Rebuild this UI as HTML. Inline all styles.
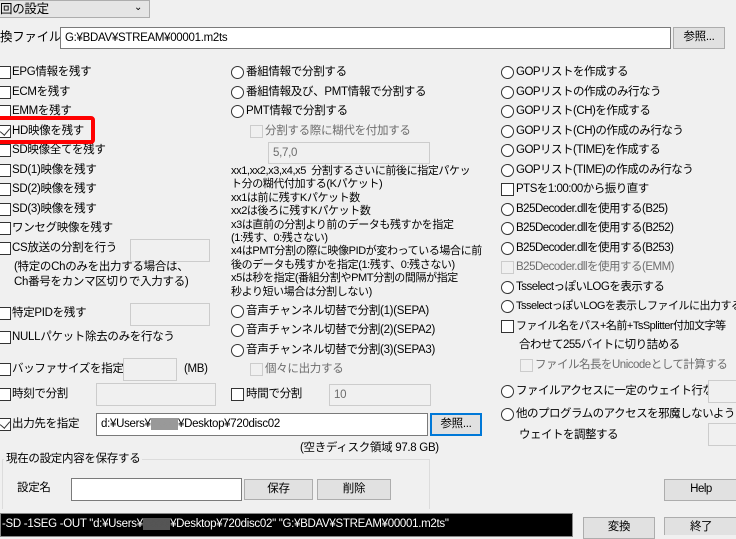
<!DOCTYPE html>
<html><head><meta charset="utf-8"><style>
*{box-sizing:border-box;margin:0;padding:0}
body{width:736px;height:535px;overflow:hidden;background:#f0f0f0;position:relative;font-family:"Liberation Sans","Noto Sans CJK JP",sans-serif;font-size:11.5px;letter-spacing:-0.3px;color:#000}
.a{position:absolute;white-space:nowrap;line-height:16px}
.cb{position:absolute;width:13px;height:13px;border:1px solid #333;background:#fff}
.cb.d{border-color:#ccc;background:#f0f0f0}
.rb{position:absolute;width:13px;height:13px;border:1px solid #333;border-radius:50%;background:#fff}
.in{position:absolute;background:#fff;border:1px solid #7a7a7a;line-height:20px;padding-left:4px}
.in.d{background:#f0f0f0;border-color:#ccc;color:#6d6d6d}
.bt{position:absolute;background:#e1e1e1;border:1px solid #adadad;text-align:center;line-height:19px}
.g{color:#6d6d6d}
.ck::after{content:"";position:absolute;left:3px;top:0px;width:5px;height:8px;border:solid #333;border-width:0 1.5px 1.5px 0;transform:rotate(40deg)}
</style></head><body>
<!-- combo -->
<div class="a" style="left:-2px;top:0;width:152px;height:18px;background:#e5e5e5;border:1px solid #adadad"></div>
<div class="a" style="left:0;top:1px;font-size:12.5px">回の設定</div>
<div class="a" style="left:134px;top:0px;font-size:10px">&#8964;</div>
<div class="a" style="left:0;top:29px;font-size:12.5px">換ファイル</div>
<div class="in" style="left:60px;top:27px;width:611px;height:22px">G:¥BDAV¥STREAM¥00001.m2ts</div>
<div class="bt" style="left:673px;top:27px;width:52px;height:22px">参照...</div>

<!-- left column -->
<div class="cb" style="left:-2px;top:66px"></div><div class="a" style="left:12px;top:64px">EPG情報を残す</div>
<div class="cb" style="left:-2px;top:86px"></div><div class="a" style="left:12px;top:84px">ECMを残す</div>
<div class="cb" style="left:-2px;top:105px"></div><div class="a" style="left:12px;top:103px">EMMを残す</div>
<div class="cb ck" style="left:-2px;top:125px"></div><div class="a" style="left:12px;top:123px">HD映像を残す</div>
<div class="cb" style="left:-2px;top:144px"></div><div class="a" style="left:12px;top:142px">SD映像全てを残す</div>
<div class="cb" style="left:-2px;top:164px"></div><div class="a" style="left:12px;top:162px">SD(1)映像を残す</div>
<div class="cb" style="left:-2px;top:183px"></div><div class="a" style="left:12px;top:181px">SD(2)映像を残す</div>
<div class="cb" style="left:-2px;top:203px"></div><div class="a" style="left:12px;top:201px">SD(3)映像を残す</div>
<div class="cb" style="left:-2px;top:222px"></div><div class="a" style="left:12px;top:220px">ワンセグ映像を残す</div>
<div class="cb" style="left:-2px;top:242px"></div><div class="a" style="left:12px;top:240px">CS放送の分割を行う</div>
<div class="in d" style="left:130px;top:239px;width:80px;height:23px"></div>
<div class="a" style="left:14px;top:260px;line-height:15px">(特定のChのみを出力する場合は、<br>Ch番号をカンマ区切りで入力する)</div>
<div class="cb" style="left:-2px;top:307px"></div><div class="a" style="left:12px;top:305px">特定PIDを残す</div>
<div class="in d" style="left:130px;top:303px;width:80px;height:23px"></div>
<div class="cb" style="left:-2px;top:331px"></div><div class="a" style="left:12px;top:329px">NULLパケット除去のみを行なう</div>
<div class="cb" style="left:-2px;top:363px"></div><div class="a" style="left:12px;top:361px">バッファサイズを指定</div>
<div class="in d" style="left:123px;top:358px;width:54px;height:23px"></div>
<div class="a" style="left:184px;top:361px">(MB)</div>
<div class="cb" style="left:-2px;top:388px"></div><div class="a" style="left:12px;top:386px">時刻で分割</div>
<div class="in d" style="left:96px;top:383px;width:120px;height:23px"></div>
<div class="cb ck" style="left:-2px;top:418px"></div><div class="a" style="left:12px;top:416px">出力先を指定</div>
<div class="in" style="left:96px;top:413px;width:332px;height:23px">d:¥Users¥<span style="background:#999;color:#999">xxxxx</span>¥Desktop¥720disc02</div>
<div class="bt" style="left:430px;top:413px;width:52px;height:23px;border:2px solid #0078d7;line-height:19px">参照...</div>
<div class="a" style="left:300px;top:440px">(空きディスク領域 97.8 GB)</div>

<!-- group box -->
<div class="a" style="left:2px;top:459px;width:428px;height:50px;border:1px solid #dcdcdc;border-bottom:none"></div>
<div class="a" style="left:4px;top:451px;background:#f0f0f0;padding:0 2px">現在の設定内容を保存する</div>
<div class="a" style="left:17px;top:480px">設定名</div>
<div class="in" style="left:71px;top:478px;width:171px;height:23px"></div>
<div class="bt" style="left:244px;top:479px;width:69px;height:21px">保存</div>
<div class="bt" style="left:317px;top:479px;width:74px;height:21px">削除</div>

<!-- middle column -->
<div class="rb" style="left:231px;top:66px"></div><div class="a" style="left:246px;top:64px">番組情報で分割する</div>
<div class="rb" style="left:231px;top:86px"></div><div class="a" style="left:246px;top:84px">番組情報及び、PMT情報で分割する</div>
<div class="rb" style="left:231px;top:105px"></div><div class="a" style="left:246px;top:103px">PMT情報で分割する</div>
<div class="cb d" style="left:250px;top:125px"></div><div class="a g" style="left:265px;top:123px">分割する際に糊代を付加する</div>
<div class="in d" style="left:268px;top:142px;width:162px;height:22px">5,7,0</div>
<div class="a" style="left:231px;top:165px;line-height:13.4px;font-size:11px;letter-spacing:-0.4px">xx1,xx2,x3,x4,x5&nbsp; 分割するさいに前後に指定パケッ<br>ト分の糊代付加する(Kパケット)<br>xx1は前に残すKパケット数<br>xx2は後ろに残すKパケット数<br>x3は直前の分割より前のデータも残すかを指定<br>(1:残す、0:残さない)<br>x4はPMT分割の際に映像PIDが変わっている場合に前<br>後のデータも残すかを指定(1:残す、0:残さない)<br>x5は秒を指定(番組分割やPMT分割の間隔が指定<br>秒より短い場合は分割しない)</div>
<div class="rb" style="left:231px;top:305px"></div><div class="a" style="left:246px;top:303px">音声チャンネル切替で分割(1)(SEPA)</div>
<div class="rb" style="left:231px;top:324px"></div><div class="a" style="left:246px;top:322px">音声チャンネル切替で分割(2)(SEPA2)</div>
<div class="rb" style="left:231px;top:344px"></div><div class="a" style="left:246px;top:342px">音声チャンネル切替で分割(3)(SEPA3)</div>
<div class="cb d" style="left:250px;top:363px"></div><div class="a g" style="left:265px;top:361px">個々に出力する</div>
<div class="cb" style="left:231px;top:388px"></div><div class="a" style="left:246px;top:386px">時間で分割</div>
<div class="in d" style="left:329px;top:384px;width:102px;height:22px">10</div>

<!-- right column -->
<div style="position:absolute;left:0;top:0;width:736px;height:535px;overflow:hidden;letter-spacing:-0.5px">
<div class="rb" style="left:501px;top:66px"></div><div class="a" style="left:516px;top:64px">GOPリストを作成する</div>
<div class="rb" style="left:501px;top:86px"></div><div class="a" style="left:516px;top:84px">GOPリストの作成のみ行なう</div>
<div class="rb" style="left:501px;top:105px"></div><div class="a" style="left:516px;top:103px">GOPリスト(CH)を作成する</div>
<div class="rb" style="left:501px;top:125px"></div><div class="a" style="left:516px;top:123px">GOPリスト(CH)の作成のみ行なう</div>
<div class="rb" style="left:501px;top:144px"></div><div class="a" style="left:516px;top:142px">GOPリスト(TIME)を作成する</div>
<div class="rb" style="left:501px;top:164px"></div><div class="a" style="left:516px;top:162px">GOPリスト(TIME)の作成のみ行なう</div>
<div class="cb" style="left:501px;top:183px"></div><div class="a" style="left:516px;top:181px">PTSを1:00:00から振り直す</div>
<div class="rb" style="left:501px;top:203px"></div><div class="a" style="left:516px;top:201px">B25Decoder.dllを使用する(B25)</div>
<div class="rb" style="left:501px;top:222px"></div><div class="a" style="left:516px;top:220px">B25Decoder.dllを使用する(B252)</div>
<div class="rb" style="left:501px;top:242px"></div><div class="a" style="left:516px;top:240px">B25Decoder.dllを使用する(B253)</div>
<div class="cb d" style="left:501px;top:261px"></div><div class="a g" style="left:516px;top:259px">B25Decoder.dllを使用する(EMM)</div>
<div class="rb" style="left:501px;top:281px"></div><div class="a" style="left:516px;top:279px">TsselectっぽいLOGを表示する</div>
<div class="rb" style="left:501px;top:300px"></div><div class="a" style="left:516px;top:298px;font-size:11px">TsselectっぽいLOGを表示しファイルに出力する</div>
<div class="cb" style="left:501px;top:320px"></div><div class="a" style="left:516px;top:318px;font-size:11px">ファイル名をパス+名前+TsSplitter付加文字等</div>
<div class="a" style="left:519px;top:337px">合わせて255バイトに切り詰める</div>
<div class="cb d" style="left:520px;top:359px"></div><div class="a g" style="left:535px;top:357px">ファイル名長をUnicodeとして計算する</div>
<div class="rb" style="left:501px;top:385px"></div><div class="a" style="left:516px;top:383px">ファイルアクセスに一定のウェイト行なう</div>
<div class="rb" style="left:501px;top:408px"></div><div class="a" style="left:516px;top:406px">他のプログラムのアクセスを邪魔しないように</div>
<div class="a" style="left:519px;top:427px">ウェイトを調整する</div>
<div class="in d" style="left:708px;top:380px;width:40px;height:23px"></div>
<div class="in d" style="left:708px;top:423px;width:40px;height:23px"></div>
<div class="bt" style="left:664px;top:479px;width:74px;height:22px">Help</div>
<div class="bt" style="left:664px;top:517px;width:74px;height:22px">終了</div>
</div>

<!-- bottom -->
<div class="a" style="left:0;top:513px;width:573px;height:24px;background:#000;color:#fff;border:1px solid #888;padding-left:1px;line-height:20px">-SD -1SEG -OUT "d:¥Users¥<span style="background:#555;color:#555">xxxxx</span>¥Desktop¥720disc02" "G:¥BDAV¥STREAM¥00001.m2ts"</div>
<div class="bt" style="left:583px;top:517px;width:72px;height:22px">変換</div>

<!-- red highlight -->
<div class="a" style="left:-6px;top:116px;width:101px;height:28px;border:4px solid #f00;border-radius:4px"></div>
</body></html>
